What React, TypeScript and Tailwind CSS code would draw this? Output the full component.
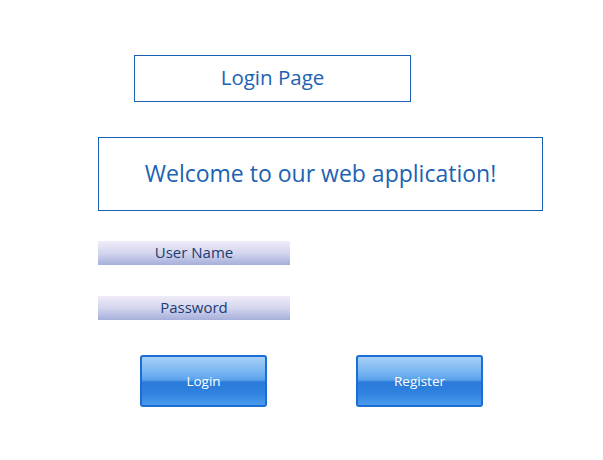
export default function App() {
  return (
    <div
      className="w-[603px] h-[460px] bg-white relative"
      style={{ fontFamily: '"Open Sans", "Noto Sans", sans-serif' }}
    >
      <div className="pt-[55px] pl-[134px]">
        {/* Title */}
        <div className="w-[277px] h-[47px] pb-[2px] border border-[#1a5fb0] flex items-center justify-center text-[20.5px] text-[#1c62b3]">
          Login Page
        </div>
      </div>
      <div className="pt-[35px] pl-[98px]">
        {/* Welcome */}
        <div className="w-[445px] h-[74px] pb-[2px] border border-[#1a5fb0] flex items-center justify-center text-[23px] text-[#1c62b3]">
          Welcome to our web application!
        </div>
      </div>
      <div className="pl-[98px] pt-[30px] flex flex-col gap-[31px]">
        <div className="w-[192px] h-[24px] pb-[2px] bg-gradient-to-b from-[#f0ecf8] via-[#d4d6ee] to-[#a6afdb] flex items-center justify-center text-[15px] text-[#1d3b72] leading-none">
          User Name
        </div>
        <div className="w-[192px] h-[24px] pb-[2px] bg-gradient-to-b from-[#f0ecf8] via-[#d4d6ee] to-[#a6afdb] flex items-center justify-center text-[15px] text-[#1d3b72] leading-none">
          Password
        </div>
      </div>
      <div className="pl-[140px] pt-[35px] flex gap-[89px]">
        {["Login", "Register"].map((label) => (
          <button
            key={label}
            className="w-[127px] h-[52px] rounded-[3px] border-2 border-[#1b6ed3] text-white text-[13.5px] bg-[linear-gradient(to_bottom,#a7d0f7_0%,#7ab6f2_30%,#5aa2ec_48%,#2a7ad9_52%,#2f82df_75%,#4a9bee_100%)]"
          >
            {label}
          </button>
        ))}
      </div>
    </div>
  );
}
